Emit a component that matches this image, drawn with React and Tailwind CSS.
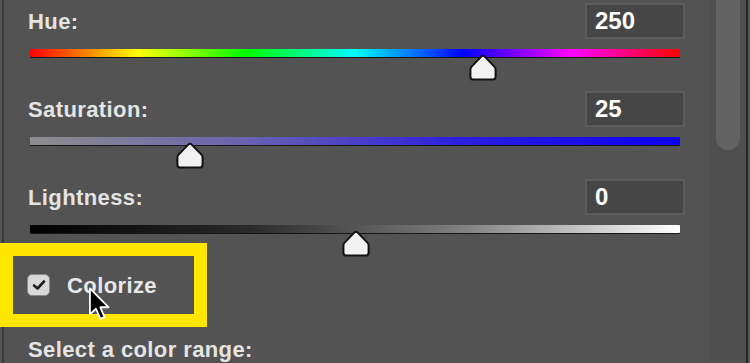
import React from 'react';

const sliders = [
  {
    label: 'Hue:',
    value: 250,
    pos: 69.7,
    bar: 'bg-[linear-gradient(to_right,#ff0000,#ffff00,#00ff00,#00ffff,#0000ff,#ff00ff,#ff0000)]',
  },
  {
    label: 'Saturation:',
    value: 25,
    pos: 24.6,
    bar: 'bg-[linear-gradient(to_right,#8d8d8d,#6a62b0,#2a1ee0,#0c00f0)]',
  },
  {
    label: 'Lightness:',
    value: 0,
    pos: 50.2,
    bar: 'bg-[linear-gradient(to_right,#000000,#2a2a2a,#808080,#ffffff)]',
  },
];

const Thumb = () => (
  <svg width="28" height="27" viewBox="0 0 28 27">
    <path
      d="M12.3 2.6 Q14 1 15.7 2.6 L25.4 12.6 Q26.6 13.8 26.6 15.6 L26.6 22.4 Q26.6 25.6 23.4 25.6 L4.6 25.6 Q1.4 25.6 1.4 22.4 L1.4 15.6 Q1.4 13.8 2.6 12.6 Z"
      fill="#f2f2f2"
      stroke="#111"
      strokeWidth="2"
      strokeLinejoin="round"
    />
  </svg>
);

const Slider = ({ label, value, pos, bar }) => (
  <div className="mb-[34px]">
    <div className="flex items-center justify-between h-[36px]">
      <span className="text-[22px] font-bold tracking-[0.4px] text-[#e4e4e4]">{label}</span>
      <div className="w-[100px] h-[36px] bg-[#464646] border-2 border-[#5c5c5c] flex items-center pl-[8px]">
        <span className="text-[24px] font-bold text-white leading-none">{value}</span>
      </div>
    </div>
    <div className={`relative mt-[10px] ml-[2px] mr-[5px] h-[8px] rounded-[1px] shadow-[0_1px_0_#161616] ${bar}`}>
      <div className="absolute top-[5px]" style={{ left: `calc(${pos}% - 14px)` }}>
        <Thumb />
      </div>
    </div>
  </div>
);

const Cursor = () => (
  <svg width="28" height="34" viewBox="0 0 18 23">
    <path
      d="M1.5 1 L1.5 18.5 L5.6 14.7 L8.6 21.6 L11.4 20.4 L8.5 13.7 L14.2 13.7 Z"
      fill="#000"
      stroke="#fff"
      strokeWidth="1.2"
      strokeLinejoin="round"
    />
  </svg>
);

export default function App() {
  return (
    <div
      className="w-[750px] h-[363px] overflow-hidden bg-[#535353] flex shadow-[inset_2px_0_0_#555555,inset_4px_0_0_#3a3a3a]"
      style={{ fontFamily: '"Liberation Sans", Arial, sans-serif' }}
    >
      <div className="flex-1 flex flex-col pt-[3px] pl-[28px] pr-[25px]">
        {sliders.map((s) => (
          <Slider key={s.label} {...s} />
        ))}

        <div className="-mt-[24px] -ml-[28px] relative w-[207px] h-[90px] border-[13px] border-[#ffe600] flex items-center pl-[14px]">
          <div className="w-[23px] h-[22px] rounded-[5px] bg-[#d8d8d8] border border-[#8a8a8a] flex items-center justify-center">
            <svg width="14" height="12" viewBox="0 0 14 12">
              <path d="M2 6.5 L5.5 9.5 L12 2.5" fill="none" stroke="#1e1e1e" strokeWidth="2.6" strokeLinecap="round" strokeLinejoin="round" />
            </svg>
          </div>
          <span className="ml-[17px] text-[22px] font-bold tracking-[0.4px] text-[#e8e8e8]">Colorize</span>
          <div className="absolute left-[74px] top-[31px]">
            <Cursor />
          </div>
        </div>

        <div className="mt-[10px] text-[22px] leading-[26px] font-bold tracking-[0.4px] text-[#e4e4e4]">
          Select a color range:
        </div>
      </div>

      <div className="w-[36px] bg-[#4f4f4f] pl-[6px]">
        <div className="w-[24px] h-[150px] rounded-b-[12px] bg-[#626262]" />
      </div>
      <div className="w-[2px] bg-[#2a2520]" />
      <div className="w-[2px] bg-[#555555]" />
    </div>
  );
}
